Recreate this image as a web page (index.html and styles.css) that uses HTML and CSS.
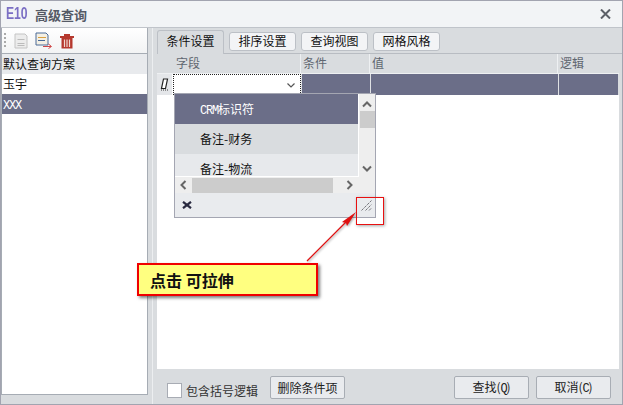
FILE: index.html
```html
<!DOCTYPE html>
<html lang="zh-CN">
<head>
  <meta charset="UTF-8">
  <title>高级查询</title>
  <link rel="stylesheet" href="styles.css">
</head>
<body>
  <div class="window">
    <div class="titlebar">
      <span class="logo">E10</span>
      <span class="title">高级查询</span>
      <svg class="close" width="11" height="10" viewBox="0 0 11 10"><path d="M1 0.5L10 9.5M10 0.5L1 9.5" stroke="#5c6068" stroke-width="2"/></svg>
    </div>
    <div class="body">
      <div class="left-panel">
        <div class="toolbar">
          <span class="grip"></span>
          <svg width="14" height="16" viewBox="0 0 14 16"><path d="M1 1H11L13 3V15H1Z" fill="#ececec" stroke="#c4c4c4"/><path d="M3.5 6.5H10.5M3.5 10.5H10.5M3.5 12.5H10.5" stroke="#bbb"/></svg>
          <svg width="18" height="17" viewBox="0 0 18 17"><path d="M1 1H11L13 3V13H1Z" fill="#f4f0e4" stroke="#4a6a98"/><path d="M3 5.5H11" stroke="#d9a040"/><path d="M3 8.5H10" stroke="#4a6a98"/><path d="M8 14.5H16M13.5 12L16.5 14.5L13.5 16.5" fill="none" stroke="#d04848"/></svg>
          <svg width="14" height="16" viewBox="0 0 14 16"><path d="M0 3H14V5H0ZM4 1H10V3H4Z" fill="#b5382e"/><path d="M1.5 5H12.5V15.5H1.5Z" fill="#b5382e"/><path d="M4.5 6.5V14M7 6.5V14M9.5 6.5V14" stroke="#f0d8d0" stroke-width="1.2"/></svg>
        </div>
        <div class="plan-list">
          <div class="plan plan-head">默认查询方案</div>
          <div class="plan">玉宇</div>
          <div class="plan plan-selected"><span class="latin">XXX</span></div>
        </div>
      </div>
      <div class="splitter"></div>
      <div class="right-panel">
        <div class="tabs">
          <div class="tab tab-active">条件设置</div>
          <div class="tab">排序设置</div>
          <div class="tab">查询视图</div>
          <div class="tab">网格风格</div>
        </div>
        <div class="grid">
          <div class="grid-head">
            <div class="cell-indicator"></div>
            <div class="head-field">字段</div>
            <div class="head-cond">条件</div>
            <div class="head-value">值</div>
            <div class="head-logic">逻辑</div>
          </div>
          <div class="grid-row">
            <div class="cell-indicator row-indicator">
              <svg width="9" height="13" viewBox="0 0 9 13"><path d="M3.5 1H7.5L5.5 10.5H1.5Z" fill="#fff" stroke="#222" stroke-width="1.2"/><path d="M1 12H8" stroke="#333" stroke-dasharray="1 1"/></svg>
            </div>
            <div class="cell-editor">
              <svg width="8" height="5" viewBox="0 0 8 5"><path d="M0.5 0.5L4 4L7.5 0.5" fill="none" stroke="#555" stroke-width="1.2"/></svg>
            </div>
            <div class="cell-dark cell-cond"></div>
            <div class="cell-dark cell-value"></div>
            <div class="cell-dark cell-logic"></div>
          </div>
          <div class="grid-empty"></div>

          <div class="dropdown">
            <div class="dropdown-top">
              <div class="options">
                <div class="option option-selected"><span class="latin">CRM</span>标识符</div>
                <div class="option option-alt">备注-财务</div>
                <div class="option option-cut">备注-物流</div>
              </div>
              <div class="vscroll">
                <svg width="10" height="7" viewBox="0 0 10 7"><path d="M1 5.5L5 1.5L9 5.5" fill="none" stroke="#666" stroke-width="2"/></svg>
                <div class="vthumb"></div>
                <svg class="vdown" width="10" height="7" viewBox="0 0 10 7"><path d="M1 1.5L5 5.5L9 1.5" fill="none" stroke="#666" stroke-width="2"/></svg>
              </div>
            </div>
            <div class="hscroll">
              <svg width="7" height="10" viewBox="0 0 7 10"><path d="M5.5 1L1.5 5L5.5 9" fill="none" stroke="#666" stroke-width="2"/></svg>
              <div class="hthumb"></div>
              <svg width="7" height="10" viewBox="0 0 7 10"><path d="M1.5 1L5.5 5L1.5 9" fill="none" stroke="#666" stroke-width="2"/></svg>
            </div>
            <div class="dropdown-foot">
              <svg width="10" height="8" viewBox="0 0 10 8"><path d="M1 0.8L9 7.2M9 0.8L1 7.2" stroke="#2a2a40" stroke-width="2.2"/></svg>
              <svg width="11" height="11" viewBox="0 0 11 11"><path d="M0.5 10.5L10.5 0.5M4.5 10.5L10.5 4.5M8 10.5L10.5 8" stroke="#77777d" stroke-dasharray="3 1"/></svg>
            </div>
          </div>
        </div>
        <div class="footer">
          <label class="check"><span class="checkbox"></span>包含括号逻辑</label>
          <button class="btn btn-delete">删除条件项</button>
          <button class="btn btn-search">查找(<span class="latin">Q</span>)</button>
          <button class="btn btn-cancel">取消(<span class="latin">C</span>)</button>
        </div>
      </div>
    </div>
  </div>

  <!-- annotation on top of the screenshot -->
  <div class="mark-box"></div>
  <svg class="mark-arrow" width="70" height="70" viewBox="0 0 70 70">
    <path d="M3 62L44 21" stroke="#e01010" stroke-width="1.2"/>
    <path d="M52 13L38 23L42 24L43 27Z" fill="#e01010"/>
  </svg>
  <div class="callout">点击 可拉伸</div>
</body>
</html>
```

FILE: styles.css
```css
html, body {
  margin: 0;
  padding: 0;
}
body {
  position: relative;
  width: 623px;
  height: 405px;
  overflow: hidden;
  font-family: "Noto Sans CJK SC", "Liberation Sans", sans-serif;
  font-size: 12px;
  color: #111;
}
.latin {
  font-family: "Liberation Mono", monospace;
  font-size: 12px;
  letter-spacing: -1.2px;
}
.window {
  display: flex;
  flex-direction: column;
  width: 623px;
  height: 405px;
  box-sizing: border-box;
  border: 1px solid #a2a4b0;
  background: #d9dcdf;
}
.titlebar {
  display: flex;
  align-items: center;
  height: 27px;
  flex: none;
  padding: 0 11px 0 5px;
  box-sizing: border-box;
  background: #f2f4f6;
  border-bottom: 1px solid #c0c4ca;
}
.logo {
  width: 29px;
  font-family: "Liberation Sans", sans-serif;
  font-size: 16px;
  font-weight: bold;
  color: #7b6fc4;
  transform: scaleX(0.76);
  transform-origin: left center;
}
.title {
  font-size: 13px;
  font-weight: bold;
  color: #555a66;
}
.close {
  margin-left: auto;
}
.body {
  display: flex;
  flex: 1;
  min-height: 0;
}
.left-panel {
  display: flex;
  flex-direction: column;
  width: 147px;
  flex: none;
  box-sizing: border-box;
  margin-bottom: 9px;
  border-left: 1px solid #a6acb4;
  border-right: 1px solid #a6acb4;
  border-bottom: 1px solid #a6acb4;
}
.toolbar {
  display: flex;
  align-items: center;
  gap: 7px;
  height: 26px;
  flex: none;
  padding-left: 2px;
  box-sizing: border-box;
  background: linear-gradient(#fff, #f2f3f4);
  border-bottom: 1px solid #a6acb4;
}
.grip {
  width: 2px;
  height: 16px;
  margin-right: 1px;
  background: repeating-linear-gradient(#aaa 0 2px, transparent 2px 4px);
}
.plan-list {
  flex: 1;
  background: #fff;
}
.plan {
  height: 20px;
  line-height: 20px;
  padding-left: 1px;
  color: #111;
}
.plan-head {
  background: #e8eaed;
}
.plan-selected {
  background: #6b6e88;
  color: #fff;
}
.splitter {
  width: 4px;
  flex: none;
  border-right: 1px solid #eceef0;
}
.right-panel {
  display: flex;
  flex-direction: column;
  flex: 1;
  min-width: 0;
  padding: 0 3px 0 4px;
}
.tabs {
  display: flex;
  align-items: flex-end;
  gap: 5px;
  height: 26px;
  flex: none;
  margin-right: -3px;
  box-sizing: border-box;
  border-bottom: 1px solid #b8bcc2;
}
.tab {
  width: 67px;
  height: 19px;
  line-height: 16px;
  margin-bottom: 2px;
  box-sizing: border-box;
  text-align: center;
  color: #111;
  background: #f3f4f6;
  border: 1px solid #bcc0c6;
  border-radius: 3px;
}
.tab-active {
  height: 24px;
  line-height: 20px;
  margin-bottom: -1px;
  background: #d9dcdf;
  border-bottom: none;
  border-radius: 3px 3px 0 0;
}
.grid {
  position: relative;
  display: flex;
  flex-direction: column;
  flex: 1;
  min-height: 0;
}
.grid-head {
  display: flex;
  height: 20px;
  flex: none;
  color: #5f6670;
  line-height: 18px;
  box-sizing: border-box;
  border-bottom: 1px solid #eef0f2;
}
.grid-head > div {
  box-sizing: border-box;
  border-right: 1px solid #eef0f2;
  padding-left: 2px;
}
.cell-indicator {
  width: 16px;
  flex: none;
}
.grid-head .cell-indicator {
  border: none;
}
.grid-head .head-field {
  width: 128px;
  padding-left: 3px;
}
.head-cond {
  width: 69px;
}
.head-value {
  width: 188px;
}
.grid-head .head-logic {
  flex: 1;
  border: none;
}
.grid-row {
  display: flex;
  height: 21px;
  flex: none;
}
.row-indicator {
  display: flex;
  align-items: center;
  justify-content: center;
  background: #e4e6e9;
  border-right: 1px solid #fff;
  box-sizing: border-box;
}
.cell-editor {
  display: flex;
  align-items: center;
  justify-content: flex-end;
  width: 128px;
  box-sizing: border-box;
  padding-right: 5px;
  background: #fff;
  border: 1px dotted #222;
  border-bottom: none;
}
.cell-dark {
  background: #6b6e88;
  box-sizing: border-box;
  border-left: 1px solid #dfe1e4;
}
.cell-cond {
  width: 69px;
}
.cell-value {
  width: 188px;
}
.cell-logic {
  width: 60px;
}
.grid-empty {
  flex: 1;
  background: #fff;
}
.dropdown {
  position: absolute;
  left: 17px;
  top: 39px;
  width: 202px;
  height: 125px;
  box-sizing: border-box;
  border: 1px solid #a4a6b2;
  background: #e9ebee;
  display: flex;
  flex-direction: column;
}
.dropdown-top {
  display: flex;
  height: 83px;
  flex: none;
}
.options {
  flex: 1;
  border-right: 1px solid #fff;
  border-bottom: 1px solid #fff;
  overflow: hidden;
}
.option {
  height: 30px;
  line-height: 29px;
  padding-left: 25px;
  color: #111;
}
.option-selected {
  background: #6b6e88;
  color: #fff;
}
.option-alt {
  background: #d9dcdf;
}
.option-cut {
  height: 23px;
  line-height: 29px;
  background: #e7e9ec;
}
.vscroll {
  display: flex;
  flex-direction: column;
  align-items: center;
  width: 16px;
  flex: none;
  padding-top: 7px;
  box-sizing: border-box;
  background: #eeeeee;
}
.vthumb {
  width: 15px;
  height: 17px;
  margin-top: 3px;
  background: #cccccc;
}
.vdown {
  margin-top: auto;
  margin-bottom: 5px;
}
.hscroll {
  display: flex;
  align-items: center;
  height: 16px;
  flex: none;
  padding: 0 20px 0 5px;
  background: #eeeeee;
}
.hthumb {
  width: 141px;
  height: 15px;
  margin: 0 13px 0 5px;
  background: #cccccc;
}
.dropdown-foot {
  display: flex;
  align-items: center;
  justify-content: space-between;
  flex: 1;
  padding: 0 3px 0 7px;
}
.footer {
  display: flex;
  align-items: center;
  height: 35px;
  flex: none;
  margin-right: -3px;
  padding-left: 10px;
  padding-right: 11px;
  box-sizing: border-box;
}
.check {
  display: flex;
  align-items: center;
  gap: 4px;
  color: #333;
  margin-top: 7px;
  width: 103px;
}
.checkbox {
  width: 13px;
  height: 13px;
  background: #fff;
  border: 1px solid #a8acb4;
}
.btn {
  width: 75px;
  height: 23px;
  margin-top: 2px;
  box-sizing: border-box;
  padding: 0;
  font-family: inherit;
  font-size: 12px;
  line-height: 20px;
  color: #222;
  background: #e9ebee;
  border: 1px solid #a8adb4;
  border-radius: 2px;
}
.btn-search {
  margin-left: auto;
}
.btn-cancel {
  margin-left: 7px;
}
.mark-box {
  position: absolute;
  left: 356px;
  top: 197px;
  width: 28px;
  height: 28px;
  box-sizing: border-box;
  border: 1px solid #e81010;
  box-shadow: 1px 1px 3px rgba(0, 0, 0, 0.35);
}
.mark-arrow {
  position: absolute;
  left: 304px;
  top: 199px;
  filter: drop-shadow(1px 1px 1px rgba(0, 0, 0, 0.35));
}
.callout {
  position: absolute;
  left: 137px;
  top: 263px;
  width: 181px;
  height: 33px;
  box-sizing: border-box;
  padding-left: 11px;
  line-height: 31px;
  font-size: 16px;
  font-weight: bold;
  color: #111;
  background: #ffff80;
  border: 2px solid #f00000;
  box-shadow: 2px 2px 3px rgba(0, 0, 0, 0.5);
}
```
